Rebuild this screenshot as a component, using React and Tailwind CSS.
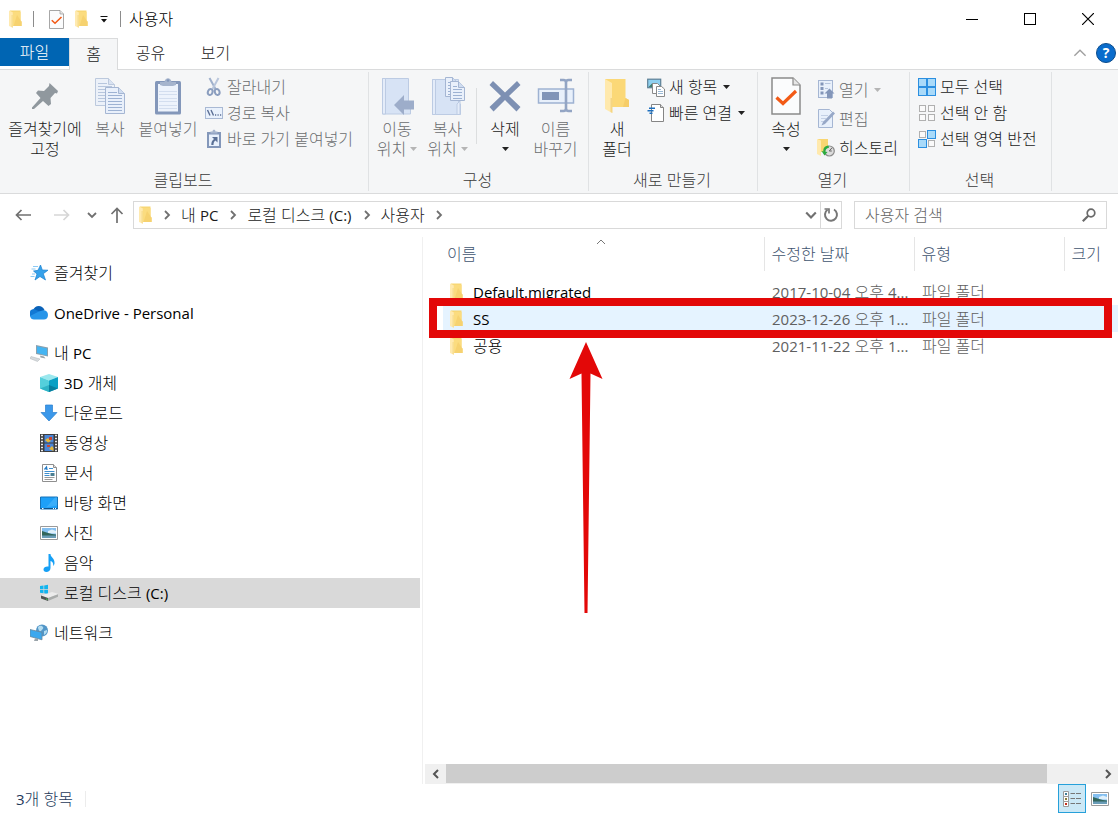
const FONT = "font-['Open_Sans','Noto_Sans_CJK_KR',sans-serif]"

// Latin runs are set a little smaller than Hangul so the two look even
function Label({ text }) {
  return (
    <span className="whitespace-pre">
      {text.split(/([!-~][ -~]*[!-~]|[!-~])/).map((part, i) =>
        i % 2 ? <span key={i} className="text-[15px] font-normal">{part}</span> : part
      )}
    </span>
  )
}

/* ---------- icons ---------- */

function FolderIcon({ className = 'w-[13px] h-[18px]' }) {
  return (
    <svg viewBox="0 0 13 18" className={className} aria-hidden="true">
      <path d="M1 0.5h10.500v11h1V16H1z" fill="#f8d775" />
      <path d="M4 2h7.500v9.500h1V16H4z" fill="#fbdc7f" />
      <path d="M8 5l4.500 6.500V16H4.500z" fill="#f3cc66" opacity=".6" />
      <path d="M0 0.500l3.800 1.800V17.800L0 16z" fill="#ffeab0" />
      <path d="M3.800 5v12.800L2.500 17V5z" fill="#f7dc8c" />
    </svg>
  )
}

function BigFolderIcon() {
  return (
    <svg viewBox="0 0 26 36" className="w-[26px] h-[36px]" aria-hidden="true">
      <path d="M1 1h20.500v19l3.500 2v7H8z" fill="#fbd877" />
      <path d="M21.500 20l3.500 2v7h-6l2.500-9z" fill="#f6cd68" />
      <path d="M1 1l7 4v30L1 31z" fill="#ffe9ad" />
      <path d="M6.500 20h2v15l-2-1z" fill="#f5d583" />
    </svg>
  )
}

function CheckDoc({ className }) {
  return (
    <svg viewBox="0 0 30 38" className={className} aria-hidden="true">
      <path d="M1 1h21l7 7v29H1z" fill="#fbfcfd" stroke="#8a8a8a" strokeWidth="1.500" />
      <path d="M22 1v7h7" fill="#e6e6e6" stroke="#8a8a8a" strokeWidth="1.200" />
      <path d="M5.500 20.500l6.500 6L25 14" fill="none" stroke="#f25a16" strokeWidth="3.200" />
    </svg>
  )
}

function PinIcon() {
  return (
    <svg viewBox="0 0 28 28" className="w-[28px] h-[28px]" aria-hidden="true">
      <path d="M18.500 1l8.500 8-1 2.500-2-.5-4.500 5 .5 6-2.500 2-5.500-5L3 27H1v-1.500l8.500-9.500L5 11l2-2.500 6 .5 5-5z" fill="#90989e" />
    </svg>
  )
}

function SheetPaths({ x, y, w = 20, h = 26, lines = 7 }) {
  const rows = Array.from({ length: lines }, (_, i) => y + 5 + i * 3)
  return (
    <g>
      <path d={`M${x} ${y}h${w - 6}l6 6v${h - 6}h-${w}z`} fill="#e9f0fb" stroke="#a5b6d3" />
      <path d={`M${x + w - 6} ${y}v6h6`} fill="#cfdcf0" stroke="#a5b6d3" />
      {rows.map((ry, i) => (
        <path key={i} d={`M${x + 2.500} ${ry}h${i < 1 ? w - 10 : w - 5}`} stroke="#9db2d3" />
      ))}
    </g>
  )
}

function CopyIcon() {
  return (
    <svg viewBox="0 0 32 38" className="w-[32px] h-[38px]" aria-hidden="true">
      <g opacity=".7"><SheetPaths x={1.5} y={1.5} w={19} h={27} /></g>
      <SheetPaths x={11.5} y={10.5} w={19} h={26} />
    </svg>
  )
}

function PasteIcon() {
  return (
    <svg viewBox="0 0 28 38" className="w-[28px] h-[38px]" aria-hidden="true">
      <rect x="1" y="4" width="26" height="33.500" rx="1.500" fill="#8397ba" />
      <rect x="4" y="7" width="20" height="27.500" fill="#edf3fc" />
      <path d="M5 14.500h18M5 17.500h18M5 21.500h18M5 24.500h18M5 28.500h18M5 31.500h18" stroke="#d3deef" />
      <path d="M6 5h4.500c.5-5 6.500-5 7 0H22v3l-3 1H9L6 8z" fill="#a5b4cd" />
      <circle cx="14" cy="3.500" r="1.300" fill="#8397ba" />
    </svg>
  )
}

function ScissorsIcon() {
  return (
    <svg viewBox="0 0 18 20" className="w-[18px] h-[20px]" aria-hidden="true" fill="none">
      <path d="M4.500 1l6 11" stroke="#9fb0cc" strokeWidth="2" />
      <path d="M13.500 1l-6 11" stroke="#b9c6dc" strokeWidth="2" />
      <ellipse cx="5.200" cy="15" rx="2.300" ry="3" stroke="#8b9ebf" strokeWidth="2" transform="rotate(20 5.200 15)" />
      <ellipse cx="12.200" cy="15" rx="2.300" ry="3" stroke="#8b9ebf" strokeWidth="2" transform="rotate(-20 12.200 15)" />
    </svg>
  )
}

function PathIcon() {
  return (
    <svg viewBox="0 0 18 12" className="w-[18px] h-[12px]" aria-hidden="true">
      <rect x=".5" y=".5" width="17" height="11" fill="#e9f1fc" stroke="#a9b9d4" />
      <path d="M2.500 3l2.500 5.500M6 3l2.500 5.500" stroke="#5c6f95" strokeWidth="1.400" />
      <path d="M10 8h1.200M12.500 8h1.200M15 8h1.200" stroke="#5c6f95" strokeWidth="1.300" />
    </svg>
  )
}

function PasteShortcutIcon() {
  return (
    <svg viewBox="0 0 18 20" className="w-[18px] h-[20px]" aria-hidden="true">
      <rect x="2" y="3" width="14" height="16" fill="#8397ba" />
      <rect x="4" y="5.500" width="10" height="11.500" fill="#e9f1fc" />
      <path d="M5.500 2.500h2c0-2.500 3-2.500 3 0h2v2h-7z" fill="#a5b4cd" />
      <path d="M7 8h5.500v5.500l-2-2c-1.500 1-2 2-2 4.500H6.300c0-3 .7-4.500 2.700-6z" fill="#5a7096" />
    </svg>
  )
}

function MoveToIcon() {
  return (
    <svg viewBox="0 0 34 38" className="w-[34px] h-[38px]" aria-hidden="true">
      <path d="M2.500 1.500h26V26l2 1v10h-28z" fill="#d7e3f5" stroke="#bccbe3" />
      <path d="M2.500 1.500h3V37h-3z" fill="#e4ecf9" stroke="#bccbe3" />
      <path d="M14 28l10-10v5.500h10v9H24V38z" fill="#9dadca" />
    </svg>
  )
}

function CopyToIcon() {
  return (
    <svg viewBox="0 0 36 40" className="w-[36px] h-[40px]" aria-hidden="true">
      <path d="M2.500 3.500h26V27l2 1v10.500h-28z" fill="#d7e3f5" stroke="#bccbe3" />
      <path d="M2.500 3.500h3v35h-3z" fill="#e4ecf9" stroke="#bccbe3" />
      <path d="M27 28l3-3v13.500h-3z" fill="#e4ecf9" stroke="#bccbe3" />
      <SheetPaths x={15.5} y={1.5} w={13} h={19} lines={5} />
      <SheetPaths x={20.5} y={5.5} w={14} h={19} lines={5} />
    </svg>
  )
}

function DeleteIcon() {
  return (
    <svg viewBox="0 0 32 32" className="w-[32px] h-[32px]" aria-hidden="true">
      <path d="M4 1l12 11.500L28 1l3.500 4L20 16l11.500 11-4 4.500L16 20 4.500 31.500.5 27 12 16 .5 5z" fill="#7d90b3" />
    </svg>
  )
}

function RenameIcon() {
  return (
    <svg viewBox="0 0 38 36" className="w-[38px] h-[36px]" aria-hidden="true">
      <rect x="1.500" y="11" width="35" height="14" fill="#e8f0fb" stroke="#9eb2d2" strokeWidth="1.500" />
      <rect x="5" y="14" width="17" height="8" fill="#8094b8" />
      <path d="M23 2h3.500c1.500 0 2.500.8 2.500 2.500v26c0 1.700-1 2.500-2.500 2.500H23M35 2h-3.500C30 2 29 2.800 29 4.500M29 30.500c0 1.700 1 2.500 2.500 2.500H35" fill="none" stroke="#93a5c4" strokeWidth="2.600" />
    </svg>
  )
}

function NewItemIcon() {
  return (
    <svg viewBox="0 0 18 19" className="w-[18px] h-[19px]" aria-hidden="true">
      <rect x=".7" y="1.200" width="13" height="8.500" fill="#8fd0f0" stroke="#5d7f95" strokeWidth="1.200" />
      <path d="M1.500 9l4-4 4 4z" fill="#3f7d6d" />
      <path d="M5.500 5.500h5l2.500 2.500v7.500H5.500z" fill="#fff" stroke="#8a8a8a" />
      <path d="M9.500 8.500h5l3 2.500v7.500h-8z" fill="#fff" stroke="#8a8a8a" />
      <path d="M11 11.500h3M11 13.500h5M11 15.500h5" stroke="#9ab8d4" />
    </svg>
  )
}

function EasyAccessIcon() {
  return (
    <svg viewBox="0 0 18 20" className="w-[18px] h-[20px]" aria-hidden="true">
      <path d="M4.500 1.500h9l3 3v14h-12z" fill="#fff" stroke="#858585" />
      <path d="M13.500 1.500v3h3" fill="#ddd" stroke="#858585" />
      <path d="M2 5.200h6M.5 7.700h6M2.500 10.200h3" stroke="#1d6fbe" strokeWidth="1.400" />
    </svg>
  )
}

function OpenIcon() {
  return (
    <svg viewBox="0 0 17 19" className="w-[17px] h-[19px]" aria-hidden="true">
      <rect x=".5" y=".5" width="14" height="17" fill="#e8f0fb" stroke="#a5b6d3" />
      <path d="M2.500 2.500h3v3h-3zM2.500 7h3v3h-3zM2.500 11.500h3v3h-3z" fill="#8396b9" />
      <path d="M7 3.500h5.500M7 8.500h3" stroke="#b6c5dd" />
      <path d="M11.500 8.500l5 5h-2.500V18.500H9V13.500H6.500z" fill="#8396b9" />
    </svg>
  )
}

function EditIcon() {
  return (
    <svg viewBox="0 0 17 19" className="w-[17px] h-[19px]" aria-hidden="true">
      <path d="M.5.5h11l3 3v15H.5z" fill="#e8f0fb" stroke="#a5b6d3" />
      <path d="M3 6.500h7M3 9.500h5M3 12.500h4" stroke="#c3d0e5" />
      <path d="M15 2.500l2 2L7 15l-3.500 1.500L5 13z" fill="#97a8c7" />
    </svg>
  )
}

function HistoryIcon() {
  return (
    <svg viewBox="0 0 18 19" className="w-[18px] h-[19px]" aria-hidden="true">
      <path d="M1 1h10v13H1z" fill="#f9d671" />
      <path d="M0 1l4 1.500V18l-4-2z" fill="#ffe9ad" />
      <circle cx="12.300" cy="13" r="5" fill="#dcdcdc" stroke="#8b8b8b" strokeWidth="1.200" />
      <path d="M12.300 13l2.500-3M12.300 13h2.500" stroke="#666" />
      <path d="M11.500 7.500c-4 .3-5.500 3-5 6l-2-.5 3 4.500 3-3.500-2-.3c0-2.500 1-3.700 3.500-4z" fill="#2cab3f" />
    </svg>
  )
}

const tile = (x, y, on) => (
  <rect key={`${x}-${y}`} x={x + 0.5} y={y + 0.5} width={on ? 8 : 6} height={on ? 8 : 6} fill={on ? '#a9daf9' : '#fafafa'} stroke={on ? '#2b8fe0' : '#b0b0b0'} />
)

function SelectAllIcon() {
  return (
    <svg viewBox="0 0 18 18" className="w-[18px] h-[18px]" aria-hidden="true">
      {tile(0, 0, true)}{tile(9, 0, true)}{tile(0, 9, true)}{tile(9, 9, true)}
    </svg>
  )
}

function SelectNoneIcon() {
  return (
    <svg viewBox="0 0 18 18" className="w-[18px] h-[18px]" aria-hidden="true">
      {tile(1, 1)}{tile(10, 1)}{tile(1, 10)}{tile(10, 10)}
    </svg>
  )
}

function InvertIcon() {
  return (
    <svg viewBox="0 0 18 18" className="w-[18px] h-[18px]" aria-hidden="true">
      {tile(1, 1)}{tile(9, 0, true)}{tile(0, 9, true)}{tile(10, 10)}
    </svg>
  )
}

function Caret({ color = '#222222' }) {
  return (
    <svg viewBox="0 0 7 4" className="w-[7px] h-[4px]" aria-hidden="true">
      <path d="M0 0h7L3.500 4z" fill={color} />
    </svg>
  )
}

function Chevron({ dir = 'right', size = 'w-[10px] h-[10px]', color = '#707070', width = 1.8 }) {
  const paths = { right: 'M3 1l4 4-4 4', left: 'M7 1L3 5l4 4', down: 'M1 3l4 4 4-4', up: 'M1 7l4-4 4 4' }
  return (
    <svg viewBox="0 0 10 10" className={size} fill="none" aria-hidden="true">
      <path d={paths[dir]} stroke={color} strokeWidth={width} />
    </svg>
  )
}

/* ---------- sidebar icons ---------- */

const treeIcons = {
  star: (
    <>
      <path d="M10.500 1l1.800 5 5.700.2-4.700 3.500 2.200 6.300-5.500-3.500L5 16l2-6-3.500-3 4.500-.7z" fill="#35a1ea" stroke="#1a7fd0" strokeWidth=".7" />
      <path d="M3 2.500h5M1.500 5h4M2 10h3M.5 12.500h4" stroke="#8ccaf4" />
    </>
  ),
  cloud: (
    <>
      <path d="M3 7c1-6 9-7 11.500-1L9 12z" fill="#0a62b8" />
      <path d="M4 5C0 5-1.500 9 0 12l3 2 8.500-5.500z" fill="#1279d4" />
      <path d="M12.500 6.500c3.500-1 5.500 1.500 5.500 4.500s-2 4.500-4 4.500H4c-2 0-3.500-1-4-3.500L9 7.500z" fill="#2795e9" />
    </>
  ),
  pc: (
    <>
      <path d="M6 1l12 2.500v9L6 10z" fill="#8aa0ae" />
      <path d="M7 2.200l10 2.200v7L7 9z" fill="#44b4f2" />
      <path d="M10 11.500l4 1 1.500 2-5-1z" fill="#9aa4aa" />
      <path d="M1 12.500l9 2.500-2.500 2.500L0 14.500z" fill="#d6dadd" stroke="#aeb4b8" strokeWidth=".5" />
    </>
  ),
  cube: (
    <>
      <path d="M9 0l9 3-9 3.500L0 3z" fill="#9be8ee" />
      <path d="M0 3l9 3.500V18L0 14.500z" fill="#54cfdb" />
      <path d="M18 3L9 6.500V18l9-3.500z" fill="#0aa0c4" />
      <path d="M0 14.500L9 11v7z" fill="#2fb4c6" />
      <path d="M18 14.500L9 11v7z" fill="#087f9e" />
    </>
  ),
  down: <path d="M5.500 1h7v7.500h4.500L9 17 1 8.500h4.500z" fill="#3b98ea" stroke="#2a7fcf" strokeWidth=".7" />,
  film: (
    <>
      <path d="M0 0h18v18H0z" fill="#3d3d3d" />
      <path d="M4.500 1h9v7.500h-9zM4.500 9.500h9V17h-9z" fill="#4a86d8" />
      <path d="M5 6l3-2 3 3-3 1.500zM9 15l3-3 1.500 2v3z" fill="#e3b63a" />
      <path d="M9 3h3v3H9zM7 11h3v2H7z" fill="#c9452f" />
      <path d="M1 1.500h2M1 4.500h2M1 7.500h2M1 10.500h2M1 13.500h2M1 16.500h2M15 1.500h2M15 4.500h2M15 7.500h2M15 10.500h2M15 13.500h2M15 16.500h2" stroke="#e8e8e8" strokeWidth="1.600" />
    </>
  ),
  doc: (
    <>
      <path d="M2.500.5h11l3 3v14h-14z" fill="#fff" stroke="#8f8f8f" />
      <path d="M13.500.5v3h3" fill="#e0e0e0" stroke="#8f8f8f" />
      <path d="M9 4.500h4M4.500 7.500h10M4.500 9.500h5M4.500 11.500h5" stroke="#3f8fce" />
      <path d="M4.500 13.500h10M4.500 15.500h8" stroke="#9a9a9a" />
      <path d="M4.500 5.500L6.500 3l.5 3" fill="none" stroke="#2178c4" strokeWidth="1.300" />
      <path d="M10.500 9h4v3h-4z" fill="#4b7f92" />
    </>
  ),
  desktop: (
    <>
      <path d="M.5 3h17v12H.5z" fill="#1da0f8" stroke="#1673b8" />
      <path d="M17 3.500v8L6 13.500 15 3.500z" fill="#4fb7fb" opacity=".6" />
      <path d="M.5 14.500h17" stroke="#0d538c" />
      <path d="M2 14.500h1.500M13 14.500h1M15 14.500h1" stroke="#fff" />
    </>
  ),
  photo: (
    <>
      <path d="M.5 2.500h17v13H.5z" fill="#fff" stroke="#9a9a9a" />
      <path d="M2 4h14v10H2z" fill="#84bff0" />
      <path d="M8 7l4-1.500L16 7v2.500H8z" fill="#dff0fb" />
      <path d="M2 7c4 1 8 3 14 3.500V12H2z" fill="#32665c" />
      <path d="M2 11.500h14V14H2z" fill="#6a9db8" />
    </>
  ),
  music: <path d="M8.500 0h2c0 3.500 4.500 4 4 9.500-.2 1.300-.7 2-1.300 2.500.5-3-1-4.500-2.700-5v7c0 2.500-2 4-4.200 4C4.500 18 3.500 17 3.500 15.500c0-2.200 2.500-3.500 5-3z" fill="#16a0f5" />,
  disk: (
    <>
      <path d="M0 2l3.500-.5v3.500H0zM4.200 1.400L8 .8V5H4.200zM0 5.700h3.500v3.500L0 8.700zM4.200 5.700H8v4.200l-3.800-.6z" fill="#12b4ee" />
      <path d="M1 11.500L12 8l6.500 2-10.500 4z" fill="#ececec" />
      <path d="M1 11.500l7 2.500v3L1 14.500z" fill="#4f5552" />
      <path d="M8 14l10.500-4v2.500L8 17z" fill="#a9acab" />
      <path d="M6 15.200h1.500" stroke="#43d34f" />
    </>
  ),
  network: (
    <>
      <circle cx="12" cy="6.500" r="6" fill="#5296c8" />
      <path d="M8 3c2-2 4-1 5 0s-1 3-2 4-3-1-3-4zM14 7l3-1c.5 2-1 4-3 5z" fill="#b4dcf0" />
      <path d="M0 5.500l12 2.800v7.500L0 12.500z" fill="#3ba8ee" stroke="#6a8799" strokeWidth=".8" />
      <path d="M5 14.200l3 .8v2H4z" fill="#9aa4aa" />
    </>
  ),
}

/* ---------- ribbon parts ---------- */

function BigButton({ icon, lines, width, disabled, caret, caretBelow }) {
  return (
    <button type="button" className={`${width} flex flex-col items-center leading-5 ${disabled ? 'text-[#6b6d6f]' : 'text-[#1a1a1a]'}`}>
      <span className="h-[40px] mb-[3px] flex items-center justify-center">{icon}</span>
      {lines.map((line, i) => (
        <span key={line} className="flex items-center gap-1 whitespace-nowrap">
          {line}
          {caret && i === lines.length - 1 && <Caret color={disabled ? '#b5b5b5' : '#222222'} />}
        </span>
      ))}
      {caretBelow && <span className="h-5 flex items-center"><Caret /></span>}
    </button>
  )
}

function SmallButton({ icon, label, disabled, caret, height = 'h-[26px]' }) {
  return (
    <button type="button" className={`${height} flex items-center gap-1 whitespace-nowrap ${disabled ? 'text-[#6b6d6f]' : 'text-[#1a1a1a]'}`}>
      <span className="w-[18px] flex justify-center">{icon}</span>
      {label}
      {caret && <span className="ml-0.5"><Caret color={disabled ? '#b5b5b5' : '#222222'} /></span>}
    </button>
  )
}

function RibbonGroup({ title, width, children }) {
  return (
    <section aria-label={title} className={`${width} shrink-0 my-0.5 flex flex-col justify-between border-r border-[#e0e2e4]`}>
      <div className="flex items-start pt-0.5">{children}</div>
      <p className="pb-px pr-0.5 text-center leading-5 text-[#3a3a3a]">{title}</p>
    </section>
  )
}

function Ribbon() {
  return (
    <div className="h-[125px] flex border-y border-[#dadbdc] bg-[#f5f6f7]">
      <RibbonGroup title="클립보드" width="w-[369px]">
        <div className="flex pl-1.5 pt-0.5">
          <BigButton icon={<PinIcon />} lines={['즐겨찾기에', '고정']} width="w-[78px]" />
          <BigButton icon={<CopyIcon />} lines={['복사']} width="w-[52px]" disabled />
          <BigButton icon={<PasteIcon />} lines={['붙여넣기']} width="w-[64px]" disabled />
        </div>
        <div className="pl-[5px]">
          <SmallButton icon={<ScissorsIcon />} label="잘라내기" disabled />
          <SmallButton icon={<PathIcon />} label="경로 복사" disabled />
          <SmallButton icon={<PasteShortcutIcon />} label="바로 가기 붙여넣기" disabled />
        </div>
      </RibbonGroup>
      <RibbonGroup title="구성" width="w-[220px]">
        <div className="flex pl-[3px] pt-0.5">
          <BigButton icon={<MoveToIcon />} lines={['이동', '위치']} width="w-[50px]" disabled caret />
          <BigButton icon={<CopyToIcon />} lines={['복사', '위치']} width="w-[51px]" disabled caret />
          <div className="w-px h-[56px] mt-3 mx-[3px] bg-[#dcdedf]" />
          <BigButton icon={<DeleteIcon />} lines={['삭제']} width="w-[50px]" caretBelow />
          <BigButton icon={<RenameIcon />} lines={['이름', '바꾸기']} width="w-[51px]" disabled />
        </div>
      </RibbonGroup>
      <RibbonGroup title="새로 만들기" width="w-[169px]">
        <div className="flex pl-1 pt-0.5">
          <BigButton icon={<BigFolderIcon />} lines={['새', '폴더']} width="w-[48px]" />
        </div>
        <div className="pl-1.5">
          <SmallButton icon={<NewItemIcon />} label="새 항목" caret />
          <SmallButton icon={<EasyAccessIcon />} label="빠른 연결" caret />
        </div>
      </RibbonGroup>
      <RibbonGroup title="열기" width="w-[152px]">
        <div className="flex pl-1 pt-0.5">
          <BigButton icon={<CheckDoc className="w-[30px] h-[38px]" />} lines={['속성']} width="w-[48px]" caretBelow />
        </div>
        <div className="pl-[7px] pt-px">
          <SmallButton icon={<OpenIcon />} label="열기" height="h-[29px]" disabled caret />
          <SmallButton icon={<EditIcon />} label="편집" height="h-[29px]" disabled />
          <SmallButton icon={<HistoryIcon />} label="히스토리" height="h-[29px]" />
        </div>
      </RibbonGroup>
      <RibbonGroup title="선택" width="w-[142px]">
        <div className="pl-2">
          <SmallButton icon={<SelectAllIcon />} label="모두 선택" />
          <SmallButton icon={<SelectNoneIcon />} label="선택 안 함" />
          <SmallButton icon={<InvertIcon />} label="선택 영역 반전" />
        </div>
      </RibbonGroup>
    </div>
  )
}

/* ---------- window chrome ---------- */

function TitleBar() {
  return (
    <header className="h-[38px] flex items-center justify-between">
      <div className="flex items-center pl-[9px]">
        <FolderIcon />
        <span className="w-px h-4 ml-[11px] mr-[15px] bg-[#8c8c8c]" />
        <button type="button" aria-label="속성"><CheckDoc className="w-[15px] h-[19px]" /></button>
        <button type="button" aria-label="새 폴더" className="ml-[11px]"><FolderIcon /></button>
        <button type="button" aria-label="빠른 실행 도구 모음 사용자 지정" className="ml-[12px]">
          <svg viewBox="0 0 8 8" className="w-[8px] h-[8px]"><path d="M.5 1.500h7" stroke="#111" /><path d="M1 4h6L4 7.500z" fill="#111" /></svg>
        </button>
        <span className="w-px h-4 ml-3 mr-2 bg-[#8c8c8c]" />
        <h1 className="text-black">사용자</h1>
      </div>
      <div className="flex pr-px">
        <button type="button" aria-label="최소화" className="w-[58px] h-[38px] flex items-center justify-center">
          <span className="w-3 h-px bg-black" />
        </button>
        <button type="button" aria-label="최대화" className="w-[58px] h-[38px] flex items-center justify-center">
          <span className="w-3 h-3 border border-black" />
        </button>
        <button type="button" aria-label="닫기" className="w-[58px] h-[38px] flex items-center justify-center">
          <svg viewBox="0 0 12 12" className="w-3 h-3"><path d="M0 0l12 12M12 0L0 12" stroke="#000" strokeWidth="1.200" /></svg>
        </button>
      </div>
    </header>
  )
}

function Tabs() {
  return (
    <nav className="h-[31px] flex items-start text-[#1a1a1a]">
      <button type="button" className="w-[69px] h-[28px] bg-[#0065b3] text-white">파일</button>
      <button type="button" className="relative z-10 w-[49px] h-[32px] pb-0.5 border border-b-0 border-[#dadbdc] bg-[#f5f6f7]">홈</button>
      <button type="button" className="w-[65px] h-[30px]">공유</button>
      <button type="button" className="w-[65px] h-[30px]">보기</button>
      <div className="ml-auto h-[30px] flex items-center gap-[9px] pr-[2px]">
        <button type="button" aria-label="리본 최소화"><Chevron dir="up" size="w-[14px] h-[14px]" color="#a0a0a0" width={1} /></button>
        <button type="button" aria-label="도움말" className="w-5 h-5 rounded-full border border-[#0b4c8c] bg-[#0a6ccc] text-sm leading-4 font-bold text-white">?</button>
      </div>
    </nav>
  )
}

const crumbs = ['내 PC', '로컬 디스크 (C:)', '사용자']

function AddressBar() {
  return (
    <div className="h-[43px] flex items-center gap-3 pb-0.5 pl-[15px] pr-[11px]">
      <div className="flex items-center">
        <button type="button" aria-label="뒤로">
          <svg viewBox="0 0 16 12" className="w-4 h-3" fill="none" stroke="#707070" strokeWidth="1.700"><path d="M16 6H1.500M6.500 1l-5 5 5 5" /></svg>
        </button>
        <button type="button" aria-label="앞으로" className="ml-[23px]">
          <svg viewBox="0 0 16 12" className="w-4 h-3" fill="none" stroke="#d6d6d6" strokeWidth="1.700"><path d="M0 6h14.500M9.500 1l5 5-5 5" /></svg>
        </button>
        <button type="button" aria-label="최근 위치" className="ml-[17px]"><Chevron dir="down" /></button>
        <button type="button" aria-label="위로" className="ml-[13px]">
          <svg viewBox="0 0 14 16" className="w-[14px] h-4" fill="none" stroke="#707070" strokeWidth="1.700"><path d="M7 16V1.500M1.500 7L7 1.500 12.500 7" /></svg>
        </button>
      </div>
      <div className="-ml-[3px] h-7 flex-1 flex items-center border border-[#d9d9d9] pl-[5px]">
        <FolderIcon />
        {crumbs.map((c) => (
          <span key={c} className="flex items-center">
            <span className="ml-[10px] mr-[9px]"><Chevron /></span>
            <button type="button"><Label text={c} /></button>
          </span>
        ))}
        <span className="ml-[9px]"><Chevron /></span>
        <button type="button" aria-label="이전 위치" className="ml-auto mr-[3px]"><Chevron dir="down" size="w-[12px] h-[12px]" /></button>
        <button type="button" aria-label="새로 고침" className="w-[21px] h-[26px] flex items-center justify-center border-l border-[#d9d9d9]">
          <svg viewBox="0 0 16 16" className="w-4 h-4" fill="none" stroke="#777" strokeWidth="2"><path d="M11 2.500a6 6 0 1 1-6.500.3" /><path d="M1.500 2h4.500v4.500" strokeWidth="1.700" /></svg>
        </button>
      </div>
      <label className="w-[253px] h-7 flex items-center border border-[#d9d9d9] pl-[10px] pr-[10px]">
        <input type="search" aria-label="사용자 검색" placeholder="사용자 검색" className="min-w-0 flex-1 outline-none placeholder:text-[#666666]" />
        <svg viewBox="0 0 14 14" className="w-[14px] h-[14px]" fill="none" stroke="#6a6a6a" aria-hidden="true">
          <circle cx="9" cy="5" r="3.800" strokeWidth="1.700" />
          <path d="M6.300 7.700L.8 13.200" strokeWidth="2.200" />
        </svg>
      </label>
    </div>
  )
}

/* ---------- navigation pane ---------- */

const tree = [
  { group: [{ icon: 'star', label: '즐겨찾기' }] },
  { group: [{ icon: 'cloud', label: 'OneDrive - Personal' }] },
  {
    group: [
      { icon: 'pc', label: '내 PC' },
      { icon: 'cube', label: '3D 개체', child: true },
      { icon: 'down', label: '다운로드', child: true },
      { icon: 'film', label: '동영상', child: true },
      { icon: 'doc', label: '문서', child: true },
      { icon: 'desktop', label: '바탕 화면', child: true },
      { icon: 'photo', label: '사진', child: true },
      { icon: 'music', label: '음악', child: true },
      { icon: 'disk', label: '로컬 디스크 (C:)', child: true, selected: true },
    ],
  },
  { group: [{ icon: 'network', label: '네트워크' }] },
]

function Sidebar() {
  return (
    <aside className="w-[423px] shrink-0 flex flex-col gap-[10px] border-r border-[#f0f0f0] pt-[21px] pr-[2px]">
      {tree.map(({ group }) => (
        <ul key={group[0].label}>
          {group.map((item) => (
            <li key={item.label}>
              <button
                type="button"
                className={`w-full h-[30px] flex items-center gap-1.5 text-black ${item.child ? 'pl-10' : 'pl-[30px]'} ${item.selected ? 'bg-[#d9d9d9]' : ''}`}
              >
                <svg viewBox="0 0 18 18" className="w-[18px] h-[18px]" aria-hidden="true">{treeIcons[item.icon]}</svg>
                <Label text={item.label} />
              </button>
            </li>
          ))}
        </ul>
      ))}
    </aside>
  )
}

/* ---------- file list ---------- */

const files = [
  { name: 'Default.migrated', date: '2017-10-04 오후 4...', type: '파일 폴더' },
  { name: 'SS', date: '2023-12-26 오후 1...', type: '파일 폴더', hover: true },
  { name: '공용', date: '2021-11-22 오후 1...', type: '파일 폴더' },
]

function FileList() {
  return (
    <div className="relative flex-1 pl-5">
      <table className="w-full table-fixed border-collapse text-left">
        <thead>
          <tr className="h-[34px] text-[#3f546f]">
            <th scope="col" className="p-0 pl-1 font-light">이름</th>
            <th scope="col" className="w-[150px] p-0 pl-[7px] font-light border-l border-[#e5e5e5]">수정한 날짜</th>
            <th scope="col" className="w-[150px] p-0 pl-[7px] font-light border-l border-[#e5e5e5]">유형</th>
            <th scope="col" className="w-[54px] p-0 pl-[7px] font-light border-l border-[#e5e5e5] whitespace-nowrap">크기</th>
          </tr>
        </thead>
        <tbody className="before:block before:h-[7px]">
          {files.map((f) => (
            <tr key={f.name} className={`h-[27px] whitespace-nowrap text-[#606060] ${f.hover ? 'bg-[#e5f3ff]' : ''}`}>
              <td className="p-0 pl-[7px] text-black">
                <span className="flex items-center gap-[10px]"><FolderIcon /><Label text={f.name} /></span>
              </td>
              <td className="p-0 pl-2"><Label text={f.date} /></td>
              <td className="p-0 pl-2">{f.type}</td>
              <td className="p-0" />
            </tr>
          ))}
        </tbody>
      </table>
      <span className="absolute left-[173px] top-0"><Chevron dir="up" color="#777777" width={1} /></span>

      {/* annotation: box round the SS row and the arrow that points at it */}
      <div className="absolute left-[6px] right-[6px] top-[61px] h-[40px] border-8 border-[#e30808]" />
      <svg viewBox="0 0 34 272" className="absolute left-[146px] top-[105px] w-[34px] h-[272px]" aria-hidden="true">
        <path d="M17 0l16.500 37-12-5.500L18.500 271h-3L12.500 31.500.5 37z" fill="#e30808" />
      </svg>
    </div>
  )
}

function ScrollBar() {
  return (
    <div className="h-5 ml-[2px] flex items-start bg-[#f0f0f0]">
      <button type="button" aria-label="왼쪽으로 스크롤" className="w-[21px] h-[19px] flex items-center justify-center"><Chevron dir="left" color="#555555" width={2} /></button>
      <div className="flex-1 h-[19px] mr-[50px] bg-[#cdcdcd]" />
      <button type="button" aria-label="오른쪽으로 스크롤" className="w-[21px] h-[19px] flex items-center justify-center"><Chevron color="#555555" width={2} /></button>
    </div>
  )
}

function StatusBar() {
  return (
    <footer className="h-[30px] flex items-center justify-between pb-px pl-4 pr-[9px]">
      <p className="pr-3 border-r border-[#ececec] leading-4 text-[#1e395b]"><Label text="3개 항목" /></p>
      <div className="flex items-center gap-[5px]">
        <button type="button" aria-label="자세히" className="w-7 h-[29px] flex items-center justify-center border border-[#26a0da] bg-[#cbe8f6]">
          <svg viewBox="0 0 18 18" className="w-[18px] h-[18px]" aria-hidden="true">
            <path d="M.5 1.500h5v5h-5zM.5 6.500h5v5h-5zM.5 11.500h5v5h-5z" fill="#fff" stroke="#9a9a9a" />
            <path d="M2 3h2v2H2z" fill="#3f7f9a" />
            <path d="M2 8h2v2H2z" fill="#8a7d3a" />
            <path d="M2 13h2v2H2z" fill="#c32f1c" />
            <path d="M7.500 3.500h4.500M13 3.500h5M7.500 8.500h4.500M13 8.500h5M7.500 13.500h4.500M13 13.500h5" stroke="#777" />
          </svg>
        </button>
        <button type="button" aria-label="큰 아이콘">
          <svg viewBox="0 0 18 18" className="w-[18px] h-[18px]" aria-hidden="true">{treeIcons.photo}</svg>
        </button>
      </div>
    </footer>
  )
}

export default function App() {
  return (
    <div className={`${FONT} h-screen flex flex-col overflow-hidden bg-white text-base leading-5 font-light text-[#1a1a1a]`}>
      <TitleBar />
      <Tabs />
      <Ribbon />
      <AddressBar />
      <main className="flex-1 min-h-0 flex">
        <Sidebar />
        <div className="flex-1 min-w-0 flex flex-col">
          <FileList />
          <ScrollBar />
        </div>
      </main>
      <StatusBar />
    </div>
  )
}
